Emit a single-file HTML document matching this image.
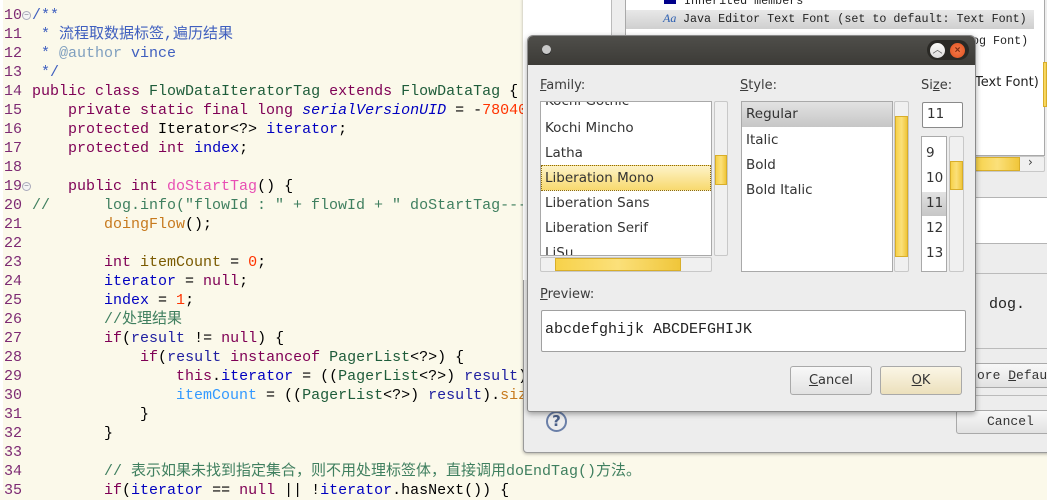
<!DOCTYPE html>
<html><head><meta charset="utf-8">
<style>
*{margin:0;padding:0;box-sizing:border-box}
body{width:1047px;height:490px;overflow:hidden;position:relative;background:#fbf9ea;font-family:"Liberation Sans","Noto Sans CJK SC",sans-serif}
.abs{position:absolute;white-space:nowrap}
#code{position:absolute;left:0;top:-13px;font-family:"Liberation Mono","Noto Sans CJK SC",monospace;font-size:15px;line-height:19px;white-space:pre;color:#000}
.ln{display:inline-block;width:22px;text-align:right;color:#7d2a73;margin-right:10px;position:relative}
.k{color:#7f0055}.c{color:#3f7f5f}.j{color:#3f5fbf}.jt{color:#7f9fbf}.f{color:#0000c0}.n{color:#ff3300}.t{color:#1e5c3a}.m{color:#e84fb4}.o{color:#c77a1e}.l{color:#7a5a00}.fl{color:#3399ff}.r{color:#2020a0}
.fold{position:absolute;left:22px;top:5px;width:9px;height:9px;border:1px solid #aab;border-radius:50%;font-size:8px;line-height:7px;text-align:center;color:#778;background:#f4f4f4}
.ui{font-family:"DejaVu Sans",sans-serif;font-size:13px;color:#3c3c3c}
.mono{font-family:"Liberation Mono",monospace}
.list{background:#fff;border:1px solid #a9a9a9}
.it{position:absolute;left:4px;font-family:"DejaVu Sans",sans-serif;font-size:13.5px;color:#333;white-space:nowrap}
.ys{background:linear-gradient(90deg,#f7d24a,#fbe07a,#f0c63a);border:1px solid #d8ae2a}
.sb{background:#f0f0f0;border:1px solid #c8c8c8;border-radius:2px}
.btn{border:1px solid #a9a9a9;border-radius:3px;background:linear-gradient(#f8f8f8,#e2e2e2);text-align:center;font-family:"DejaVu Sans",sans-serif;font-size:13px;color:#333}
u{text-decoration:underline}
</style></head><body>
<div class="abs" style="left:0;top:0;width:3px;height:490px;background:#fff"></div>
<div id="code"><span class="ln"> 9</span>
<span class="ln">10<span class="fold">−</span></span><span class="j">/**</span>
<span class="ln">11</span><span class="j"> * 流程取数据标签,遍历结果</span>
<span class="ln">12</span><span class="j"> * <span class="jt">@author</span> vince</span>
<span class="ln">13</span><span class="j"> */</span>
<span class="ln">14</span><span class="k">public class</span> <span class="t">FlowDataIteratorTag</span> <span class="k">extends</span> <span class="t">FlowDataTag</span> {
<span class="ln">15</span>    <span class="k">private static final long</span> <i class="f">serialVersionUID</i> = -<span class="n">7804012345678901234L</span>;
<span class="ln">16</span>    <span class="k">protected</span> Iterator&lt;?&gt; <span class="f">iterator</span>;
<span class="ln">17</span>    <span class="k">protected int</span> <span class="f">index</span>;
<span class="ln">18</span>
<span class="ln">19<span class="fold">−</span></span>    <span class="k">public int</span> <span class="m">doStartTag</span>() {
<span class="ln">20</span><span class="c">//      log.info("flowId : " + flowId + " doStartTag-----");</span>
<span class="ln">21</span>        <span class="o">doingFlow</span>();
<span class="ln">22</span>
<span class="ln">23</span>        <span class="k">int</span> <span class="l">itemCount</span> = <span class="n">0</span>;
<span class="ln">24</span>        <span class="f">iterator</span> = <span class="k">null</span>;
<span class="ln">25</span>        <span class="f">index</span> = <span class="n">1</span>;
<span class="ln">26</span>        <span class="c">//处理结果</span>
<span class="ln">27</span>        <span class="k">if</span>(<span class="r">result</span> != <span class="k">null</span>) {
<span class="ln">28</span>            <span class="k">if</span>(<span class="r">result</span> <span class="k">instanceof</span> <span class="t">PagerList</span>&lt;?&gt;) {
<span class="ln">29</span>                <span class="k">this</span>.<span class="f">iterator</span> = ((<span class="t">PagerList</span>&lt;?&gt;) <span class="r">result</span>).iterator();
<span class="ln">30</span>                <span class="fl">itemCount</span> = ((<span class="t">PagerList</span>&lt;?&gt;) <span class="r">result</span>).<span class="o">size</span>();
<span class="ln">31</span>            }
<span class="ln">32</span>        }
<span class="ln">33</span>
<span class="ln">34</span>        <span class="c">// 表示如果未找到指定集合，则不用处理标签体，直接调用doEndTag()方法。</span>
<span class="ln">35</span>        <span class="k">if</span>(<span class="f">iterator</span> == <span class="k">null</span> || !<span class="f">iterator</span>.hasNext()) {
</div>

<!-- preferences window -->
<div class="abs" style="left:523px;top:-5px;width:530px;height:458px;background:#ededed;border:1px solid #9a9a9a;border-radius:4px;box-shadow:0 1px 3px rgba(0,0,0,.3)"></div>
<div class="abs" style="left:523px;top:0;width:89px;height:280px;background:#fff;border-right:1px solid #bbb"></div>
<div class="abs list" style="left:625px;top:-2px;width:420px;height:158px"></div>
<div class="abs" style="left:664px;top:-4px;width:12px;height:8px;background:#00008b"></div>
<div class="abs mono" style="left:684px;top:-6px;font-size:11.7px;color:#222">Inherited members</div>
<div class="abs" style="left:626px;top:10px;width:408px;height:19px;background:linear-gradient(#e8e8e8,#cfcfcf)"></div>
<div class="abs" style="left:663px;top:11px;font-family:'Liberation Serif',serif;font-style:italic;font-size:12px;color:#2a5db0">Aa</div>
<div class="abs mono" style="left:683px;top:12px;font-size:11.7px;color:#222">Java Editor Text Font (set to default: Text Font)</div>
<div class="abs mono" style="left:972px;top:34px;font-size:11.7px;color:#222">og Font)</div>
<div class="abs ui" style="left:975px;top:75px;font-size:13px;color:#222">Text Font)</div>
<div class="abs ys" style="left:1043px;top:62px;width:4px;height:45px"></div>
<div class="abs sb" style="left:975px;top:156px;width:70px;height:16px"></div>
<div class="abs ys" style="left:975px;top:157px;width:45px;height:14px"></div>
<div class="abs ui" style="left:1028px;top:155px;font-size:12px">›</div>
<div class="abs" style="left:975px;top:197px;width:75px;height:47px;background:#fff;border:1px solid #b4b4b4"></div>
<div class="abs" style="left:975px;top:273px;width:75px;height:1px;background:#bbb"></div>
<div class="abs mono" style="left:989px;top:296px;font-size:15px;color:#222">dog.</div>
<div class="abs" style="left:975px;top:348px;width:75px;height:1px;background:#bbb"></div>
<div class="abs btn mono" style="left:960px;top:363px;width:95px;height:25px;font-family:'Liberation Mono',monospace;font-size:13px;line-height:23px;text-align:left;padding-left:16px">ore <u>D</u>efaul</div>
<div class="abs" style="left:960px;top:395px;width:90px;height:1px;background:#bbb"></div>
<div class="abs btn" style="left:956px;top:410px;width:95px;height:24px;font-family:'Liberation Mono',monospace;line-height:22px;text-align:left;padding-left:30px">Cancel</div>
<div class="abs" style="left:546px;top:411px;width:21px;height:21px;border:2px solid #6a7fa8;border-radius:50%;color:#4a5f88;font:bold 15px 'DejaVu Sans',sans-serif;text-align:center;line-height:17px">?</div>

<!-- dialog -->
<div class="abs" style="left:527px;top:35px;width:449px;height:377px;background:#ededed;border:1px solid #8a8a8a;border-radius:6px 6px 3px 3px;box-shadow:0 2px 6px rgba(0,0,0,.35);overflow:hidden">
  <div style="height:29px;background:linear-gradient(#4f4e4a,#3c3b37)"></div>
</div>
<div class="abs" style="left:542px;top:45px;width:9px;height:9px;border-radius:50%;background:#c9c9c9;box-shadow:0 1px 0 #222"></div>
<div class="abs" style="left:927px;top:40px;width:42px;height:20px;border-radius:10px;background:#2a2925"></div>
<div class="abs" style="left:930px;top:43px;width:15px;height:15px;border-radius:50%;background:linear-gradient(#fbfbf8,#ddd);color:#555;font-size:10px;text-align:center;line-height:15px">︿</div>
<div class="abs" style="left:950px;top:43px;width:15px;height:15px;border-radius:50%;background:radial-gradient(#f47a4a,#e0511f);color:#7a2a10;font:bold 10px sans-serif;text-align:center;line-height:15px">×</div>

<div class="abs ui" style="left:540px;top:78px"><u>F</u>amily:</div>
<div class="abs ui" style="left:740px;top:78px"><u>S</u>tyle:</div>
<div class="abs ui" style="left:921px;top:78px">Si<u>z</u>e:</div>

<div class="abs list" style="left:540px;top:101px;width:172px;height:155px;overflow:hidden">
  <div class="it" style="top:-9px">Kochi Gothic</div>
  <div class="it" style="top:18px">Kochi Mincho</div>
  <div class="it" style="top:43px">Latha</div>
  <div style="position:absolute;left:0;top:63px;width:170px;height:26px;background:linear-gradient(#fdf3c8,#f8d96e);border:1px dotted #8a6a10"></div>
  <div class="it" style="top:68px">Liberation Mono</div>
  <div class="it" style="top:93px">Liberation Sans</div>
  <div class="it" style="top:118px">Liberation Serif</div>
  <div class="it" style="top:143px">LiSu</div>
</div>
<div class="abs sb" style="left:714px;top:101px;width:14px;height:155px"></div>
<div class="abs ys" style="left:715px;top:155px;width:12px;height:30px"></div>
<div class="abs sb" style="left:540px;top:257px;width:172px;height:15px"></div>
<div class="abs ys" style="left:555px;top:258px;width:126px;height:13px"></div>

<div class="abs list" style="left:741px;top:101px;width:152px;height:171px;overflow:hidden">
  <div style="position:absolute;left:0;top:0;width:150px;height:25px;background:linear-gradient(#e2e2e2,#c6c6c6)"></div>
  <div class="it" style="top:4px">Regular</div>
  <div class="it" style="top:30px">Italic</div>
  <div class="it" style="top:55px">Bold</div>
  <div class="it" style="top:80px">Bold Italic</div>
</div>
<div class="abs sb" style="left:894px;top:101px;width:15px;height:171px"></div>
<div class="abs ys" style="left:895px;top:116px;width:13px;height:141px"></div>

<div class="abs" style="left:922px;top:102px;width:41px;height:26px;background:#fff;border:1px solid #8a8a8a;border-radius:2px"></div>
<div class="abs it" style="left:927px;top:106px">11</div>
<div class="abs list" style="left:921px;top:136px;width:26px;height:136px;overflow:hidden">
  <div class="it" style="top:8px">9</div>
  <div class="it" style="top:33px">10</div>
  <div style="position:absolute;left:0;top:55px;width:24px;height:24px;background:linear-gradient(#e2e2e2,#c6c6c6)"></div>
  <div class="it" style="top:58px">11</div>
  <div class="it" style="top:83px">12</div>
  <div class="it" style="top:108px">13</div>
</div>
<div class="abs sb" style="left:949px;top:136px;width:15px;height:136px"></div>
<div class="abs ys" style="left:950px;top:161px;width:13px;height:29px"></div>

<div class="abs ui" style="left:540px;top:287px"><u>P</u>review:</div>
<div class="abs" style="left:541px;top:310px;width:425px;height:42px;background:#fff;border:1px solid #a0a0a0;border-radius:2px"></div>
<div class="abs mono" style="left:545px;top:321px;font-size:15px;color:#222">abcdefghijk ABCDEFGHIJK</div>

<div class="abs btn" style="left:790px;top:366px;width:82px;height:29px;line-height:28px"><u>C</u>ancel</div>
<div class="abs btn" style="left:880px;top:366px;width:82px;height:29px;line-height:28px;background:linear-gradient(#fbf6e6,#ece0bc)"><u>O</u>K</div>
</body></html>
